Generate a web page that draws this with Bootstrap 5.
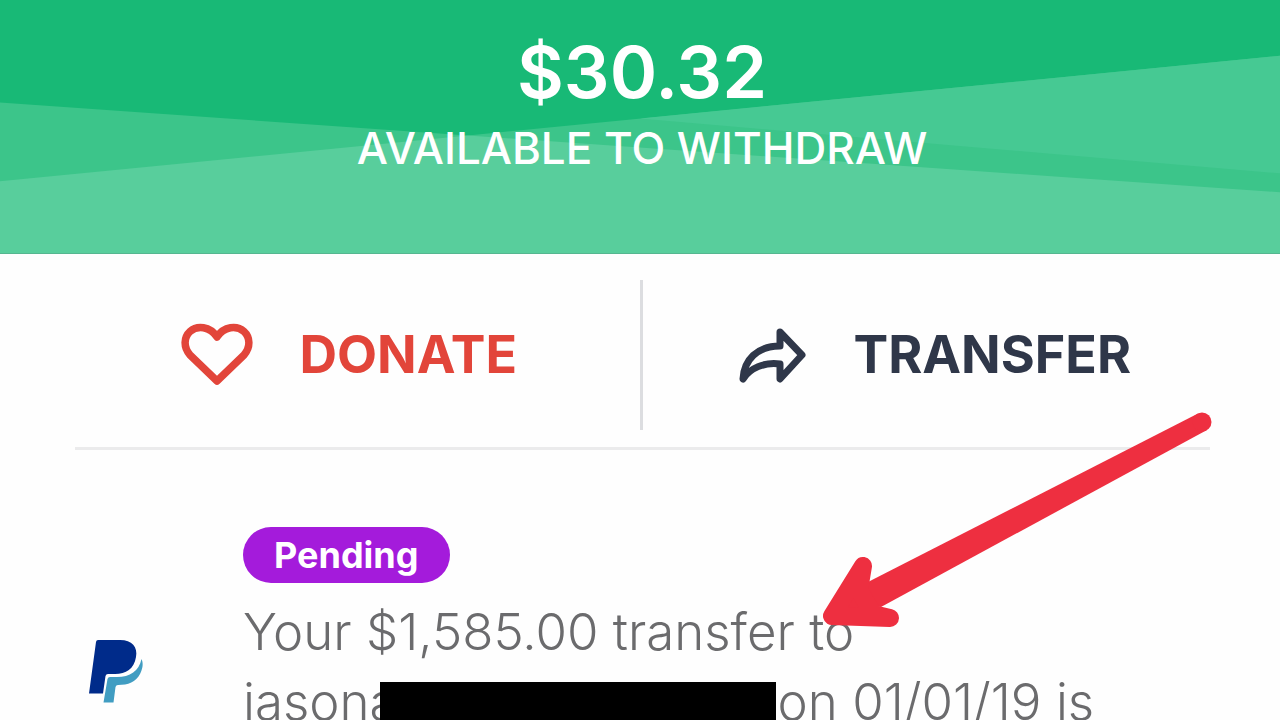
<!DOCTYPE html>
<html lang="en">
<head>
<meta charset="utf-8">
<meta name="viewport" content="width=device-width, initial-scale=1">
<title>Balance</title>
<link href="https://cdn.jsdelivr.net/npm/bootstrap@5.3.0/dist/css/bootstrap.min.css" rel="stylesheet">
<style>
  body { font-family: Inter, "Liberation Sans", sans-serif; background: #fefefe; }
  .balance { background: #18b976; padding: 36px 0 85px 4px; border-bottom: 1px solid #55b68f; }
  .balance-amount { font-size: 72px; line-height: 72px; font-weight: 600; }
  .balance-label { font-size: 44px; line-height: 40px; font-weight: 500; margin-top: 20px; }
  .page-inset { padding: 0 70px 0 75px; }
  .actions { border-bottom: 3px solid #ebebec; padding: 26px 0 17px; }
  .action { height: 150px; font-size: 52px; line-height: 52px; font-weight: 700; gap: 46px; padding: 0 16px 0 0; border: 0; background: none; }
  .action-donate { color: #e2453a; border-right: 3px solid #dcdde0; }
  .action-transfer { color: #2f3749; padding: 0 0 0 18px; }
  .entry { padding-top: 77px; }
  .entry-logo { width: 168px; padding: 113px 0 0 14px; }
  .status { background: #a41bdb; font-size: 36px; line-height: 32px; font-weight: 700; padding: 12px 31px; }
  .entry-text { font-size: 51px; line-height: 70px; font-weight: 300; color: #6b6b6d; margin-top: 14px; }
  .redacted { background: #000; width: 396px; height: 48px; margin: 0 2px 0 -18px; }
  .pointer { right: 68px; top: -38px; width: 390px; height: 218px; }
</style>
</head>
<body class="vh-100 overflow-hidden">
<header class="balance position-relative text-white text-center">
  <svg class="position-absolute top-0 start-0 w-100 h-100" viewBox="0 0 1280 254" preserveAspectRatio="none" aria-hidden="true">
    <path fill="#3cc58a" d="M0 103 468 136 1280 56V254H0Z"/>
    <path fill="#46c993" d="M640 119 1280 56V174Z"/>
    <path fill="#58ce9c" d="M0 182 468 136 1280 193V254H0Z"/>
  </svg>
  <div class="position-relative">
    <div class="balance-amount">$30.32</div>
    <div class="balance-label">AVAILABLE TO WITHDRAW</div>
  </div>
</header>
<main>
  <div class="page-inset">
    <div class="actions d-flex">
      <button type="button" class="action action-donate w-50 d-flex align-items-center justify-content-center">
        <svg width="72" height="64" viewBox="0 0 72 64" fill="none" stroke="currentColor" stroke-width="7.500" stroke-linejoin="round" aria-hidden="true"><path d="M36 58 9 32C2 24 3 14 9 8.500C16 2 29 3 36 14C43 3 56 2 63 8.500C69 14 70 24 63 32Z"/></svg>
        <span>DONATE</span>
      </button>
      <button type="button" class="action action-transfer w-50 d-flex align-items-center justify-content-center">
        <svg width="68" height="58" viewBox="0 0 68 58" fill="none" stroke="currentColor" stroke-width="7" stroke-linejoin="round" aria-hidden="true"><path d="M41 6 63 29 41 53V38C25 36 11 42 4 53C5 34 18 20 41 20Z"/></svg>
        <span>TRANSFER</span>
      </button>
    </div>
  </div>
  <section class="entry position-relative d-flex page-inset">
    <div class="entry-logo flex-shrink-0">
      <svg width="55" height="63" viewBox="0 0 55 63" role="img" aria-label="PayPal"><path fill="#002b8a" d="M9 0H31C43 0 49 7 47 17C45 29 37 34 26 34H19Q17 34 16.500 36L14 53.500H0L7 2Q7.300 0 9 0Z"/><path fill="#419dc2" d="M52.500 19C55 24 53 30 51 34C47 42 39 45 29 45Q27 45 26.500 47L24.500 62.500H14.500L18.500 39Q19 37 21 37H28C41 37 50 31 52.500 19Z"/></svg>
    </div>
    <div class="flex-fill text-nowrap">
      <span class="status d-inline-block rounded-pill text-white align-top">Pending</span>
      <div class="entry-text">Your $1,585.00 transfer to<br><span>jasona</span><span class="redacted d-inline-block align-middle"></span><span>on 01/01/19 is</span></div>
    </div>
    <svg class="pointer position-absolute" viewBox="822 412 390 218" fill="#ee2f40" aria-hidden="true">
      <path d="M1198 413.500 868 582 850 605 881 607 1207 430Z"/><circle cx="1202" cy="422" r="9.500"/>
      <path stroke="#ee2f40" stroke-width="18" stroke-linejoin="round" stroke-linecap="round" d="M863 566 832 616 890 618 873 614 859 590Z"/>
    </svg>
  </section>
</main>
<script src="https://cdn.jsdelivr.net/npm/bootstrap@5.3.0/dist/js/bootstrap.bundle.min.js"></script>
</body>
</html>
